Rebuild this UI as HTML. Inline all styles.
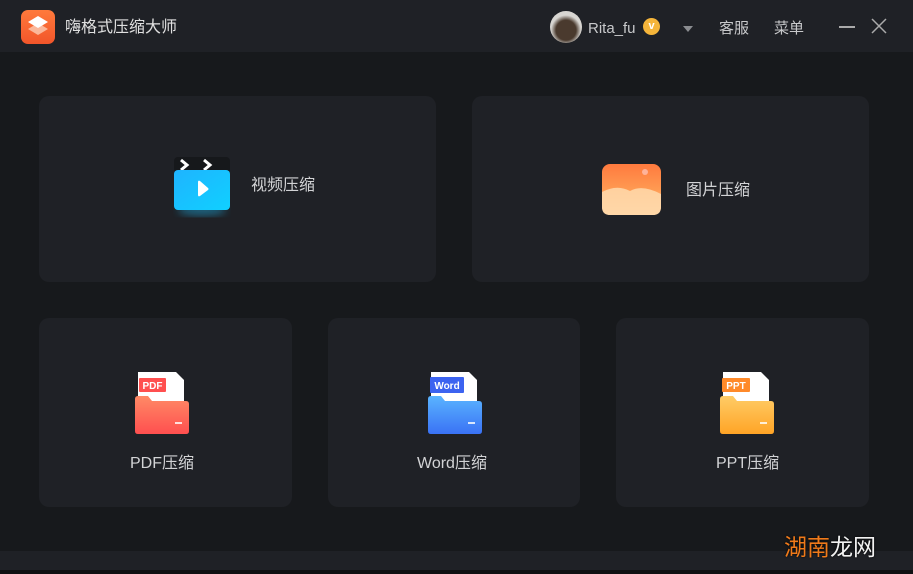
<!DOCTYPE html>
<html><head><meta charset="utf-8"><style>
*{margin:0;padding:0;box-sizing:border-box}
body{width:913px;height:574px;background:#17191c;font-family:"Liberation Sans","Noto Sans CJK SC",sans-serif;position:relative;overflow:hidden;color:#d6d7d9}
.abs{position:absolute}
.top{left:0;top:0;width:913px;height:52px;background:#1f2126}
.card{position:absolute;background:#1f2126;border-radius:10px}
.t{position:absolute;font-size:16px;color:#d2d3d5;white-space:nowrap;line-height:20px}
</style></head><body>
<div class="abs top"></div>
<svg class="abs" style="left:21px;top:10px" width="34" height="34" viewBox="0 0 34 34">
<defs><linearGradient id="lg" x1="0" y1="0" x2="0" y2="1"><stop offset="0" stop-color="#ff7a3c"/><stop offset="1" stop-color="#f2552a"/></linearGradient></defs>
<rect width="34" height="34" rx="7" fill="url(#lg)"/>
<path d="M17 13 L27 19 L17 25 L7 19Z" fill="#fbb79a"/>
<path d="M17 6 L27 12 L17 18 L7 12Z" fill="#fff"/>
</svg>
<div class="t" style="left:65px;top:18px;font-size:16px;color:#e0e0e0">嗨格式压缩大师</div>
<div class="abs" style="left:550px;top:11px;width:32px;height:32px;border-radius:50%;background:radial-gradient(circle at 50% 60%,#4a3a2e 0 40%,#d8d6d2 60%)"></div>
<div class="t" style="left:588px;top:19px;font-size:15px;color:#c8c9cb">Rita_fu</div>
<div class="abs" style="left:643px;top:18px;width:17px;height:17px;border-radius:50%;background:#f5b53a;color:#fff;font-size:11px;font-weight:bold;text-align:center;line-height:17px">v</div>
<div class="abs" style="left:683px;top:26px;width:0;height:0;border-left:5px solid transparent;border-right:5px solid transparent;border-top:6px solid #8a8c90"></div>
<div class="t" style="left:719px;top:19px;font-size:15px;color:#c8c9cb">客服</div>
<div class="t" style="left:774px;top:19px;font-size:15px;color:#c8c9cb">菜单</div>
<div class="abs" style="left:839px;top:26px;width:16px;height:1.5px;background:#aaa"></div>
<svg class="abs" style="left:871px;top:18px" width="16" height="16"><path d="M1 1L15 15M15 1L1 15" stroke="#aaa" stroke-width="1.5"/></svg>

<div class="card" style="left:39px;top:96px;width:397px;height:186px"></div>
<div class="card" style="left:472px;top:96px;width:397px;height:186px"></div>
<div class="card" style="left:39px;top:318px;width:253px;height:189px"></div>
<div class="card" style="left:328px;top:318px;width:252px;height:189px"></div>
<div class="card" style="left:616px;top:318px;width:253px;height:189px"></div>

<svg class="abs" style="left:168px;top:152px" width="70" height="72" viewBox="0 0 70 72">
<defs><linearGradient id="bl" x1="0" y1="0" x2="1" y2="1"><stop offset="0" stop-color="#1fb4ff"/><stop offset="1" stop-color="#10d0ff"/></linearGradient>
<filter id="sh"><feGaussianBlur stdDeviation="4"/></filter></defs>
<ellipse cx="34" cy="58" rx="24" ry="6" fill="#1a9fd0" opacity=".5" filter="url(#sh)"/>
<rect x="6" y="5" width="56" height="16" rx="4" fill="#16181b"/>
<path d="M13 8l6 5-6 5M36 8l6 5-6 5" stroke="#fff" stroke-width="3" fill="none"/>
<rect x="6" y="18" width="56" height="40" rx="4" fill="url(#bl)"/>
<path d="M30 30 Q30 28 32 29 L40 36 Q41 37 40 38 L32 44 Q30 45 30 43Z" fill="#fff"/>
</svg>
<div class="t" style="left:251px;top:176px">视频压缩</div>

<svg class="abs" style="left:602px;top:164px" width="59" height="51" viewBox="0 0 59 51">
<defs><linearGradient id="og" x1="0" y1="0" x2="0" y2="1"><stop offset="0" stop-color="#ff7a3e"/><stop offset=".5" stop-color="#ff9a52"/><stop offset="1" stop-color="#ffd8a4"/></linearGradient></defs>
<rect width="59" height="51" rx="8" fill="url(#og)"/>
<circle cx="43" cy="8" r="3" fill="#ffb39a"/>
<path d="M0 28 Q15 20 28 27 Q40 20 59 30 V43 Q59 51 51 51 H8 Q0 51 0 43Z" fill="#ffd7a8" opacity=".9"/>
</svg>
<div class="t" style="left:686px;top:181px">图片压缩</div>

<svg width="0" height="0" style="position:absolute"><defs>
<linearGradient id="r1" x1="0" y1="0" x2="0" y2="1"><stop offset="0" stop-color="#ff8a66"/><stop offset="1" stop-color="#ff4f4f"/></linearGradient>
<linearGradient id="b1" x1="0" y1="0" x2="0" y2="1"><stop offset="0" stop-color="#5ab4ff"/><stop offset="1" stop-color="#3a72f5"/></linearGradient>
<linearGradient id="y1" x1="0" y1="0" x2="0" y2="1"><stop offset="0" stop-color="#ffcc66"/><stop offset="1" stop-color="#ffa426"/></linearGradient>
</defs></svg>

<svg class="abs" style="left:134px;top:371px" width="56" height="64" viewBox="0 0 56 64">
<path d="M4 1H42L50 9V40H4Z" fill="#fff"/>
<rect x="5" y="7" width="27" height="14" rx="1" fill="#ff4f4f"/>
<text x="18.5" y="18" font-size="10" font-weight="bold" fill="#fff" text-anchor="middle" font-family="Liberation Sans">PDF</text>
<path d="M1 28Q1 25 4 25H14L18 30H52Q55 30 55 33V60Q55 63 52 63H4Q1 63 1 60Z" fill="url(#r1)"/>
<rect x="41" y="51" width="7" height="2" fill="#fff" opacity=".8"/>
</svg>
<div class="t" style="left:130px;top:454px">PDF压缩</div>

<svg class="abs" style="left:427px;top:371px" width="56" height="64" viewBox="0 0 56 64">
<path d="M4 1H42L50 9V40H4Z" fill="#fff"/>
<rect x="3" y="6" width="34" height="16" rx="1" fill="#3c63f0"/>
<text x="20" y="18" font-size="10" font-weight="bold" fill="#fff" text-anchor="middle" font-family="Liberation Sans">Word</text>
<path d="M1 28Q1 25 4 25H14L18 30H52Q55 30 55 33V60Q55 63 52 63H4Q1 63 1 60Z" fill="url(#b1)"/>
<rect x="41" y="51" width="7" height="2" fill="#fff" opacity=".8"/>
</svg>
<div class="t" style="left:417px;top:454px">Word压缩</div>

<svg class="abs" style="left:719px;top:371px" width="56" height="64" viewBox="0 0 56 64">
<path d="M4 1H42L50 9V40H4Z" fill="#fff"/>
<rect x="3" y="7" width="28" height="14" rx="1" fill="#ff8a2a"/>
<text x="17" y="18" font-size="10" font-weight="bold" fill="#fff" text-anchor="middle" font-family="Liberation Sans">PPT</text>
<path d="M1 28Q1 25 4 25H14L18 30H52Q55 30 55 33V60Q55 63 52 63H4Q1 63 1 60Z" fill="url(#y1)"/>
<rect x="41" y="51" width="7" height="2" fill="#fff" opacity=".8"/>
</svg>
<div class="t" style="left:716px;top:454px">PPT压缩</div>

<div class="abs" style="left:0;top:551px;width:913px;height:19px;background:#1f2126"></div>
<div class="abs" style="left:0;top:570px;width:913px;height:4px;background:#0f1012"></div>
<div class="t" style="left:784px;top:533px;font-size:23px;line-height:28px;text-shadow:0 0 2px #000"><span style="color:#f07a1a">湖南</span><span style="color:#f2f2f2">龙网</span></div>
</body></html>
